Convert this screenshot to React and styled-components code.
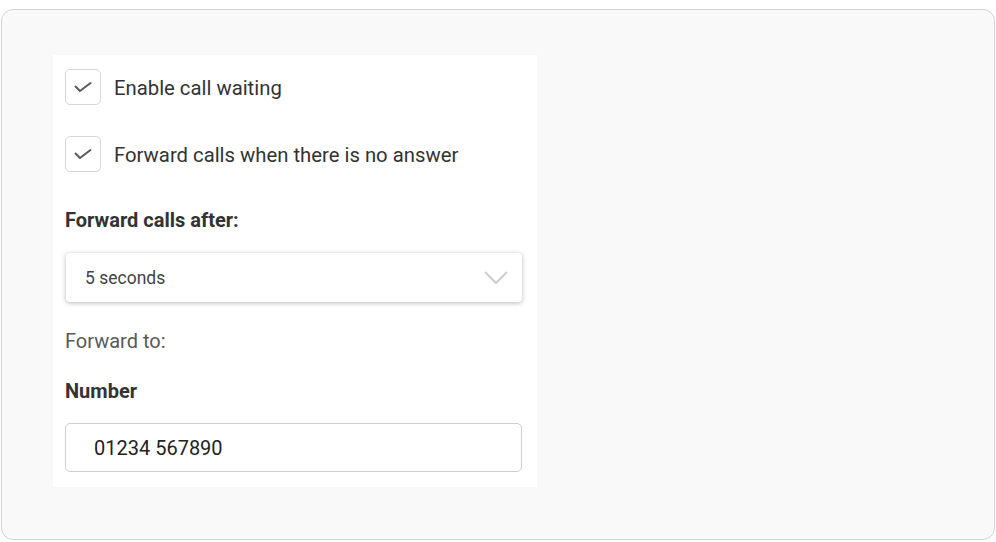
import React from 'react';
import styled, { createGlobalStyle } from 'styled-components';

const GlobalStyle = createGlobalStyle`
  body {
    margin: 0;
    background: #fff;
    font-family: Roboto, 'Liberation Sans', sans-serif;
  }
`;

const Card = styled.div`
  box-sizing: border-box;
  margin: 9px 0 0 1px;
  width: 994px;
  height: 531px;
  padding: 45px 51px;
  background: #f9f9f9;
  border: 1px solid #d4d4d4;
  border-radius: 12px;
`;

const Panel = styled.div`
  box-sizing: border-box;
  width: 484px;
  padding: 14px 15px 15px 12px;
  background: #fff;
  display: flex;
  flex-direction: column;
`;

const CheckRow = styled.label`
  box-sizing: border-box;
  display: flex;
  align-items: center;
  gap: 13px;
  height: 36px;
  padding-top: 1px;
  margin-bottom: ${(p) => p.$gap}px;
  font-size: 20.3px;
  color: #333;
`;

const Box = styled.span`
  box-sizing: border-box;
  width: 36px;
  height: 36px;
  margin-top: -1px;
  border: 1px solid #d6d6d6;
  border-radius: 5px;
  display: flex;
  align-items: center;
  justify-content: center;
`;

const Label = styled.div`
  font-size: 20px;
  font-weight: ${(p) => (p.$bold ? 700 : 400)};
  color: ${(p) => (p.$bold ? '#333' : '#595959')};
  line-height: 24px;
  margin-bottom: ${(p) => p.$gap}px;
`;

const Select = styled.div`
  box-sizing: border-box;
  height: 49px;
  margin-left: 1px;
  padding: 0 14px 0 19px;
  display: flex;
  align-items: center;
  justify-content: space-between;
  border-radius: 4px;
  background: #fff;
  box-shadow: 0 1px 5px rgba(0, 0, 0, 0.28);
  font-size: 17.5px;
  color: #444;
  margin-bottom: 27px;
`;

const Input = styled.div`
  box-sizing: border-box;
  height: 49px;
  padding: 0 28px;
  display: flex;
  align-items: center;
  border: 1px solid #cfcfcf;
  border-radius: 5px;
  font-size: 20px;
  color: #222;
`;

const Check = () => (
  <svg width="18" height="12" viewBox="0 0 18 12" fill="none">
    <path d="M1.5 5.5L6 10L16.5 2" stroke="#5a5a5a" strokeWidth="2" strokeLinecap="round" strokeLinejoin="round" />
  </svg>
);

const Chevron = () => (
  <svg width="24" height="13" viewBox="0 0 24 13" fill="none">
    <path d="M1 1l11 11L23 1" stroke="#ccc" strokeWidth="2" />
  </svg>
);

export default function App() {
  return (
    <>
      <GlobalStyle />
      <Card>
        <Panel>
          <CheckRow $gap={31}>
            <Box>
              <Check />
            </Box>
            Enable call waiting
          </CheckRow>
          <CheckRow $gap={36}>
            <Box>
              <Check />
            </Box>
            Forward calls when there is no answer
          </CheckRow>
          <Label $bold $gap={21}>Forward calls after:</Label>
          <Select>
            5 seconds
            <Chevron />
          </Select>
          <Label $gap={26}>Forward to:</Label>
          <Label $bold $gap={20}>Number</Label>
          <Input>01234 567890</Input>
        </Panel>
      </Card>
    </>
  );
}
